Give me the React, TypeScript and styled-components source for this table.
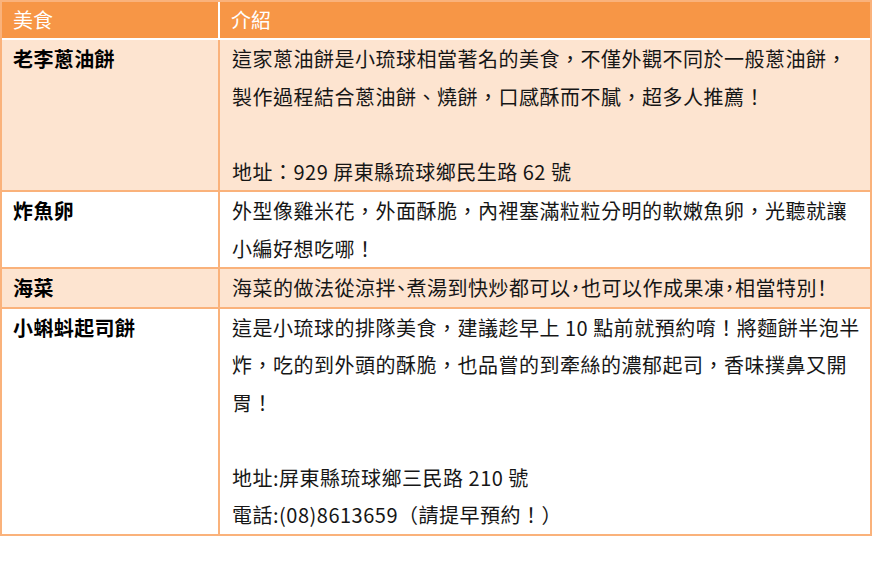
import React from "react";
import styled, { createGlobalStyle } from "styled-components";

interface Food {
  name: string;
  lines: string[];
  shaded: boolean;
  tight?: boolean;
}

const foods: Food[] = [
  {
    name: "老李蔥油餅",
    lines: [
      "這家蔥油餅是小琉球相當著名的美食，不僅外觀不同於一般蔥油餅，製作過程結合蔥油餅、燒餅，口感酥而不膩，超多人推薦！",
      "",
      "地址：929 屏東縣琉球鄉民生路 62 號",
    ],
    shaded: true,
  },
  {
    name: "炸魚卵",
    lines: [
      "外型像雞米花，外面酥脆，內裡塞滿粒粒分明的軟嫩魚卵，光聽就讓小編好想吃哪！",
    ],
    shaded: false,
  },
  {
    name: "海菜",
    lines: ["海菜的做法從涼拌、煮湯到快炒都可以，也可以作成果凍，相當特別！"],
    shaded: true,
    tight: true,
  },
  {
    name: "小蝌蚪起司餅",
    lines: [
      "這是小琉球的排隊美食，建議趁早上 10 點前就預約唷！將麵餅半泡半炸，吃的到外頭的酥脆，也品嘗的到牽絲的濃郁起司，香味撲鼻又開胃！",
      "",
      "地址:屏東縣琉球鄉三民路 210 號",
      "電話:(08)8613659（請提早預約！）",
    ],
    shaded: false,
  },
];

const GlobalStyle = createGlobalStyle`
  html, body {
    margin: 0;
    padding: 0;
    background: #ffffff;
  }
  body {
    font-family: "Noto Sans CJK TC", "Noto Sans", sans-serif;
  }
`;

const Table = styled.table`
  width: 872px;
  table-layout: fixed;
  border-collapse: separate;
  border-spacing: 0;
  border: 2px solid #fab27b;
  font-size: 20px;
`;

const HeadCell = styled.th<{ $first?: boolean }>`
  background: #f79646;
  color: #ffffff;
  font-weight: normal;
  text-align: left;
  height: 36px;
  line-height: 36px;
  padding: 0 11px;
  border-bottom: 2px solid #ffffff;
  border-right: ${(p) => (p.$first ? "2px solid #ffffff" : "none")};
`;

const Row = styled.tr<{ $shaded: boolean }>`
  background: ${(p) => (p.$shaded ? "#fde4d0" : "#ffffff")};
`;

const NameCell = styled.td<{ $last: boolean }>`
  vertical-align: top;
  padding: 0 11px;
  line-height: 37.5px;
  font-weight: bold;
  letter-spacing: 0.4px;
  color: #000000;
  border-right: 2px solid #fab27b;
  border-bottom: ${(p) => (p.$last ? "none" : "2px solid #fab27b")};
`;

const TextCell = styled.td<{ $last: boolean; $tight?: boolean }>`
  vertical-align: top;
  padding: 0 8px 0 12px;
  line-height: 37.5px;
  letter-spacing: 0.5px;
  color: #161616;
  font-feature-settings: ${(p) => (p.$tight ? '"halt"' : "normal")};
  border-bottom: ${(p) => (p.$last ? "none" : "2px solid #fab27b")};
`;

const Line = styled.div`
  min-height: 37.5px;
`;

const App: React.FC = () => {
  return (
    <>
      <GlobalStyle />
      <Table>
        <colgroup>
          <col style={{ width: 218 }} />
          <col />
        </colgroup>
        <thead>
          <tr>
            <HeadCell $first>美食</HeadCell>
            <HeadCell>介紹</HeadCell>
          </tr>
        </thead>
        <tbody>
          {foods.map((food, i) => {
            const last = i === foods.length - 1;
            return (
              <Row key={food.name} $shaded={food.shaded}>
                <NameCell $last={last}>{food.name}</NameCell>
                <TextCell $last={last} $tight={food.tight}>
                  {food.lines.map((line, j) => (
                    <Line key={j}>{line}</Line>
                  ))}
                </TextCell>
              </Row>
            );
          })}
        </tbody>
      </Table>
    </>
  );
};

export default App;
